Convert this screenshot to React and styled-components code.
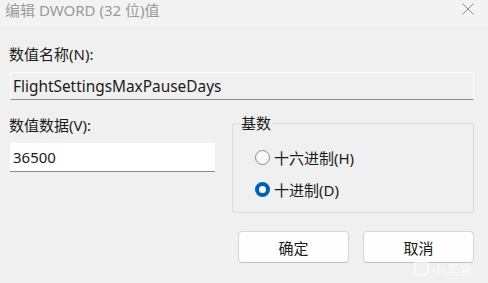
import React from 'react';
import styled, { createGlobalStyle } from 'styled-components';

const GlobalStyle = createGlobalStyle`
  html, body {
    margin: 0;
    padding: 0;
    background: #f0f0f0;
  }
  body {
    font-family: "Noto Sans", "Noto Sans CJK SC", sans-serif;
  }
`;

const Dialog = styled.div`
  position: relative;
  width: 488px;
  height: 283px;
  background: #f0f0f0;
  color: #1a1a1a;
  font-size: 15px;
  overflow: hidden;
`;

const TitleBar = styled.div`
  height: 27px;
  display: flex;
  align-items: center;
  justify-content: space-between;
  background: #f3f3f3;
  padding: 0 14px 0 5px;
  box-sizing: border-box;
`;

const Title = styled.span`
  color: #9a9a9a;
  font-size: 15px;
  margin-top: -8px;
`;

const CloseIcon = styled.svg`
  width: 12px;
  height: 12px;
  margin-top: -9px;
`;

const Body = styled.div`
  padding: 17px 14px 0 10px;
`;

const Label = styled.div`
  font-size: 15px;
  line-height: 20px;
  margin-left: -1px;
`;

const ReadOnlyField = styled.div`
  margin-top: 8px;
  height: 28px;
  box-sizing: border-box;
  border: 1px solid #fbfbfb;
  border-bottom: 1px solid #8a8a8a;
  background: #f0f0f0;
  display: flex;
  align-items: center;
  padding-left: 2px;
  font-size: 15.4px;
`;

const Row = styled.div`
  display: grid;
  grid-template-columns: 205px 1fr;
  column-gap: 17px;
  margin-top: 15px;
`;

const Column = styled.div`
  display: flex;
  flex-direction: column;
`;

const Input = styled.div`
  margin-top: 8px;
  height: 29px;
  box-sizing: border-box;
  background: #ffffff;
  border-bottom: 1px solid #8a8a8a;
  display: flex;
  align-items: center;
  padding-left: 3px;
  font-size: 15px;
`;

const GroupBox = styled.fieldset`
  margin: 0;
  height: 98px;
  box-sizing: border-box;
  border: 1px solid #dcdcdc;
  border-radius: 3px;
  padding: 16px 0 0 22px;
  display: flex;
  flex-direction: column;
  gap: 12px;
`;

const Legend = styled.legend`
  padding: 0 1px;
  margin-left: -15px;
  font-size: 15px;
  line-height: 16px;
`;

const RadioRow = styled.label`
  display: flex;
  align-items: center;
  gap: 4px;
  height: 20px;
  font-size: 15px;
`;

const RadioDot = styled.span`
  width: 15px;
  height: 15px;
  box-sizing: border-box;
  border-radius: 50%;
  background: ${p => (p.$checked ? '#ffffff' : '#f7f7f7')};
  border: ${p => (p.$checked ? '4.5px solid #005fb8' : '1px solid #8a8a8a')};
`;

const Buttons = styled.div`
  display: flex;
  justify-content: flex-end;
  gap: 14px;
  margin-top: 18px;
`;

const Button = styled.button`
  width: 111px;
  height: 32px;
  background: #fdfdfd;
  border: 1px solid #d6d6d6;
  border-bottom-color: #c2c2c2;
  border-radius: 4px;
  font-family: inherit;
  font-size: 15px;
  color: #1a1a1a;
  padding: 0;
`;

const Watermark = styled.div`
  position: absolute;
  right: 14px;
  bottom: 5px;
  color: rgba(255, 255, 255, 0.6);
  font-size: 13px;
  letter-spacing: 1px;
  display: flex;
  align-items: center;
  gap: 3px;
`;

const WatermarkMark = styled.span`
  width: 11px;
  height: 11px;
  border: 2px solid rgba(255, 255, 255, 0.6);
  border-radius: 3px;
`;

export default function App() {
  return (
    <Dialog>
      <GlobalStyle />
      <TitleBar>
        <Title>编辑 DWORD (32 位)值</Title>
        <CloseIcon viewBox="0 0 12 12">
          <path d="M0.5 0.5 L11.5 11.5 M11.5 0.5 L0.5 11.5" stroke="#8c8c8c" strokeWidth="1" fill="none" />
        </CloseIcon>
      </TitleBar>
      <Body>
        <Label>数值名称(N):</Label>
        <ReadOnlyField>FlightSettingsMaxPauseDays</ReadOnlyField>
        <Row>
          <Column>
            <Label>数值数据(V):</Label>
            <Input>36500</Input>
          </Column>
          <GroupBox>
            <Legend>基数</Legend>
            <RadioRow>
              <RadioDot />
              十六进制(H)
            </RadioRow>
            <RadioRow>
              <RadioDot $checked />
              十进制(D)
            </RadioRow>
          </GroupBox>
        </Row>
        <Buttons>
          <Button>确定</Button>
          <Button>取消</Button>
        </Buttons>
      </Body>
      <Watermark>
        <WatermarkMark />
        小黑盒
      </Watermark>
    </Dialog>
  );
}
